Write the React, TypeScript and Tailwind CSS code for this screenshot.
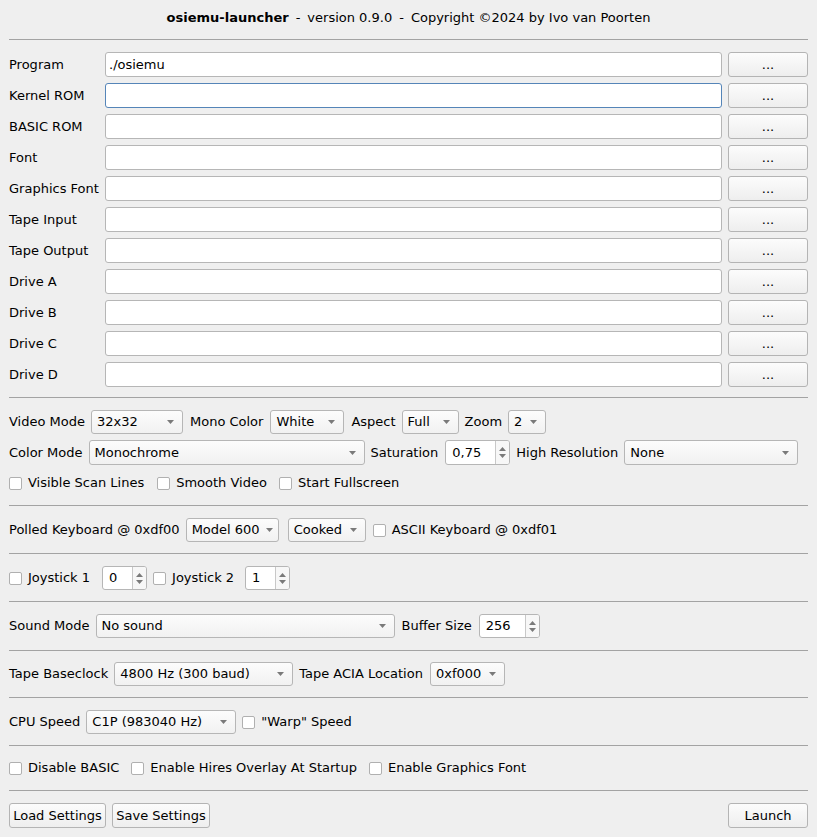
import type { ReactNode } from "react";

const FONT = { fontFamily: '"DejaVu Sans", "Liberation Sans", sans-serif' };

function Sep({ className = "" }: { className?: string }) {
  return <div className={`h-px bg-[#a3a3a3] ${className}`} />;
}

function Arrow() {
  return (
    <svg width="7" height="4" viewBox="0 0 7 4" className="ml-[6px] shrink-0">
      <path d="M0 0 L7 0 L3.5 4 Z" fill="#7a7a7a" />
    </svg>
  );
}

function Combo({ value, w, h = "h-[24px]" }: { value: string; w: string; h?: string }) {
  return (
    <div
      className={`${w} ${h} flex shrink-0 items-center justify-between rounded-[3px] border border-[#b6b6b6] bg-gradient-to-b from-[#fcfcfc] to-[#f1f1f1] pl-[5px] pr-[8px]`}
    >
      <span className="whitespace-nowrap">{value}</span>
      <Arrow />
    </div>
  );
}

function Spin({ value, w, h = "h-[24px]" }: { value: string; w: string; h?: string }) {
  return (
    <div className={`${w} ${h} flex shrink-0 items-stretch overflow-hidden rounded-[3px] border border-[#b6b6b6] bg-white`}>
      <span className="flex flex-1 items-center pl-[6px]">{value}</span>
      <div className="flex w-[14px] flex-col items-center justify-center gap-[3px] border-l border-[#c8c8c8] bg-[#f7f7f7]">
        <svg width="7" height="4" viewBox="0 0 7 4">
          <path d="M0 4 L7 4 L3.5 0 Z" fill="#7a7a7a" />
        </svg>
        <svg width="7" height="4" viewBox="0 0 7 4">
          <path d="M0 0 L7 0 L3.5 4 Z" fill="#7a7a7a" />
        </svg>
      </div>
    </div>
  );
}

function Check({ label }: { label: string }) {
  return (
    <div className="flex shrink-0 items-center gap-[6px]">
      <span className="h-[13px] w-[13px] rounded-[2px] border border-[#b0b0b0] bg-white" />
      <span>{label}</span>
    </div>
  );
}

function Button({ children, w }: { children: ReactNode; w: string }) {
  return (
    <button
      type="button"
      className={`${w} flex h-[25px] shrink-0 items-center justify-center rounded-[3px] border border-[#b4b4b4] bg-gradient-to-b from-[#fcfcfc] to-[#eeeeee] text-[13px]`}
    >
      {children}
    </button>
  );
}

const files = [
  { label: "Program", value: "./osiemu" },
  { label: "Kernel ROM", value: "", focused: true },
  { label: "BASIC ROM", value: "" },
  { label: "Font", value: "" },
  { label: "Graphics Font", value: "" },
  { label: "Tape Input", value: "" },
  { label: "Tape Output", value: "" },
  { label: "Drive A", value: "" },
  { label: "Drive B", value: "" },
  { label: "Drive C", value: "" },
  { label: "Drive D", value: "" },
];

export default function App() {
  return (
    <div className="h-[837px] w-[817px] bg-[#efefef] px-[9px] text-[13px] text-black" style={FONT}>
      <div className="flex h-[36px] items-center justify-center">
        <span className="font-bold">osiemu-launcher</span>
        <span className="mx-[7px]">-</span>
        <span>version 0.9.0</span>
        <span className="mx-[7px]">-</span>
        <span>Copyright ©2024 by Ivo van Poorten</span>
      </div>
      <Sep className="mt-[3px]" />

      <div className="mt-[12px] flex flex-col gap-[6px]">
        {files.map((f) => (
          <div key={f.label} className="flex h-[25px] items-center">
            <span className="w-[96px] shrink-0">{f.label}</span>
            <div
              className={`flex h-[25px] flex-1 items-center rounded-[3px] border bg-white pl-[3px] ${
                f.focused ? "border-[#5585b8]" : "border-[#b6b6b6]"
              }`}
            >
              {f.value}
            </div>
            <Button w="ml-[6px] w-[80px]">...</Button>
          </div>
        ))}
      </div>

      <Sep className="mt-[10px]" />
      <div className="mt-[11px] flex h-[24px] items-center pt-px">
        <span>Video Mode</span>
        <div className="ml-[6px]"><Combo value="32x32" w="w-[92px]" /></div>
        <span className="ml-[7px]">Mono Color</span>
        <div className="ml-[7px]"><Combo value="White" w="w-[74px]" /></div>
        <span className="ml-[7px]">Aspect</span>
        <div className="ml-[6px]"><Combo value="Full" w="w-[57px]" /></div>
        <span className="ml-[6px]">Zoom</span>
        <div className="ml-[6px]"><Combo value="2" w="w-[38px]" /></div>
      </div>
      <div className="mt-[7px] flex h-[25px] items-center">
        <span>Color Mode</span>
        <div className="ml-[6px]"><Combo value="Monochrome" w="w-[276px]" h="h-[25px]" /></div>
        <span className="ml-[6px]">Saturation</span>
        <div className="ml-[7px]"><Spin value="0,75" w="w-[65px]" h="h-[25px]" /></div>
        <span className="ml-[6px]">High Resolution</span>
        <div className="ml-[6px]"><Combo value="None" w="w-[174px]" h="h-[25px]" /></div>
      </div>
      <div className="mt-[9px] flex h-[18px] items-center gap-[13px]">
        <Check label="Visible Scan Lines" />
        <Check label="Smooth Video" />
        <div className="-ml-px"><Check label="Start Fullscreen" /></div>
      </div>

      <Sep className="mt-[13px]" />
      <div className="mt-[12px] flex h-[24px] items-center">
        <span>Polled Keyboard @ 0xdf00</span>
        <div className="ml-[6px]"><Combo value="Model 600" w="w-[93px]" /></div>
        <div className="ml-[9px]"><Combo value="Cooked" w="w-[78px]" /></div>
        <div className="ml-[7px]"><Check label="ASCII Keyboard @ 0xdf01" /></div>
      </div>

      <Sep className="mt-[11px]" />
      <div className="mt-[12px] flex h-[24px] items-center">
        <Check label="Joystick 1" />
        <div className="ml-[12px]"><Spin value="0" w="w-[45px]" /></div>
        <div className="ml-[6px]"><Check label="Joystick 2" /></div>
        <div className="ml-[11px]"><Spin value="1" w="w-[45px]" /></div>
      </div>

      <Sep className="mt-[11px]" />
      <div className="mt-[12px] flex h-[24px] items-center">
        <span>Sound Mode</span>
        <div className="ml-[6px]"><Combo value="No sound" w="w-[299px]" /></div>
        <span className="ml-[7px]">Buffer Size</span>
        <div className="ml-[7px]"><Spin value="256" w="w-[61px]" /></div>
      </div>

      <Sep className="mt-[12px]" />
      <div className="mt-[11px] flex h-[24px] items-center">
        <span>Tape Baseclock</span>
        <div className="ml-[6px]"><Combo value="4800 Hz (300 baud)" w="w-[179px]" /></div>
        <span className="ml-[6px]">Tape ACIA Location</span>
        <div className="ml-[7px]"><Combo value="0xf000" w="w-[75px]" /></div>
      </div>

      <Sep className="mt-[11px]" />
      <div className="mt-[12px] flex h-[24px] items-center">
        <span>CPU Speed</span>
        <div className="ml-[6px]"><Combo value="C1P (983040 Hz)" w="w-[150px]" /></div>
        <div className="ml-[6px]"><Check label={'"Warp" Speed'} /></div>
      </div>

      <Sep className="mt-[11px]" />
      <div className="mt-[13px] flex h-[18px] items-center gap-[12px]">
        <Check label="Disable BASIC" />
        <Check label="Enable Hires Overlay At Startup" />
        <Check label="Enable Graphics Font" />
      </div>

      <Sep className="mt-[13px]" />
      <div className="mt-[12px] flex items-center">
        <Button w="w-[97px]">Load Settings</Button>
        <Button w="ml-[6px] w-[98px]">Save Settings</Button>
        <div className="flex-1" />
        <Button w="w-[80px]">Launch</Button>
      </div>
    </div>
  );
}
